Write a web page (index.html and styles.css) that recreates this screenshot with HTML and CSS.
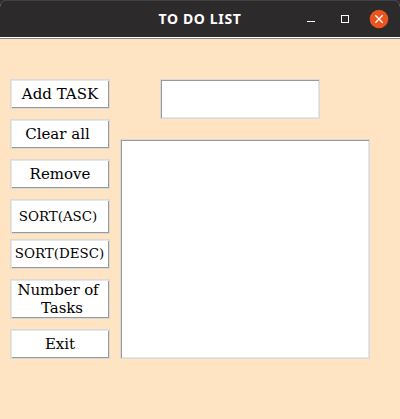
FILE: index.html
```html
<!DOCTYPE html>
<html lang="en">
<head>
<meta charset="utf-8">
<title>TO DO LIST</title>
<link rel="stylesheet" href="styles.css">
</head>
<body>
<div class="window">
  <header class="titlebar">
    <h1 class="title">TO DO LIST</h1>
    <svg class="controls" width="92" height="37" viewBox="0 0 92 37">
      <path d="M7 21.5h8" stroke="#fff" fill="none"/>
      <rect x="41.5" y="15.5" width="7" height="7" stroke="#fff" fill="none"/>
      <circle cx="79" cy="19" r="9.3" fill="#e95420"/>
      <path d="M75.3 15.3l7.4 7.4M82.7 15.3l-7.4 7.4" stroke="#fff" stroke-width="1.3" fill="none"/>
    </svg>
  </header>
  <main class="content">
    <nav class="actions">
      <button class="btn"><span class="add">Add TASK</span></button>
      <button class="btn"><span class="clear">Clear all</span></button>
      <button class="btn"><span class="remove">Remove</span></button>
      <button class="btn tall small"><span class="asc">SORT(ASC)</span></button>
      <button class="btn after-tall small"><span class="desc">SORT(DESC)</span></button>
      <button class="btn double"><span class="number">Number of<br><span class="tasks">Tasks</span></span></button>
      <button class="btn"><span class="exit">Exit</span></button>
    </nav>
    <section class="tasks-pane">
      <div class="field entry"></div>
      <div class="field list"></div>
    </section>
  </main>
</div>
</body>
</html>
```
FILE: styles.css
```css
* { box-sizing: border-box; }
body { margin: 0; background: #2a2b38; }
.window {
  width: 400px;
  height: 419px;
  background: #ffe4c4;
  border-radius: 7px 7px 0 0;
  overflow: hidden;
}
.titlebar {
  display: grid;
  grid-template-columns: 108px 184px 92px;
  padding-right: 16px;
  height: 37px;
  background: #2c2a2a;
  box-shadow: inset 0 1px #414040;
}
.title {
  grid-column: 2;
  margin: 0;
  text-align: center;
  font: bold 14px/38px "Noto Sans", sans-serif;
  letter-spacing: 0.65px;
  color: #fff;
  white-space: nowrap;
}
.controls { margin-left: 8px; }
.content {
  display: flex;
  height: 382px;
  padding: 40px 0 0 10px;
  gap: 10px;
  border-top: 1px solid #fff;
  box-shadow: inset 0 1px #828282;
}
.actions {
  display: flex;
  flex-direction: column;
  gap: 10px;
  width: 100px;
  padding-top: 1px;
}
.btn {
  flex: none;
  width: 100px;
  height: 30px;
  padding: 0;
  border: 1px solid #d9d9d9;
  background: #fff;
  box-shadow: inset 1px 1px #e6e6e6, inset -1px -1px #999;
  font: 15px/18px "DejaVu Serif", serif;
  color: #000;
  white-space: nowrap;
}
.btn > span { display: block; }
.tall { height: 35px; }
.after-tall { margin-top: -5px; }
.double { height: 40px; }
.small { font-size: 13.4px; }
.tasks-pane {
  display: flex;
  flex-direction: column;
  gap: 20px;
  padding-top: 1px;
}
.field {
  border: 1px solid #d9d9d9;
  background: #fff;
  box-shadow: inset 1px 1px #999, inset -1px -1px #e6e6e6;
}
.entry { width: 160px; height: 40px; margin-left: 40px; }
.list { width: 250px; height: 220px; }
.clear { padding-right: 5px; }
.asc { padding-right: 4px; }
.desc { padding-right: 1px; }
.number { padding-right: 4px; letter-spacing: -0.1px; }
.tasks { padding-left: 8px; }
```
